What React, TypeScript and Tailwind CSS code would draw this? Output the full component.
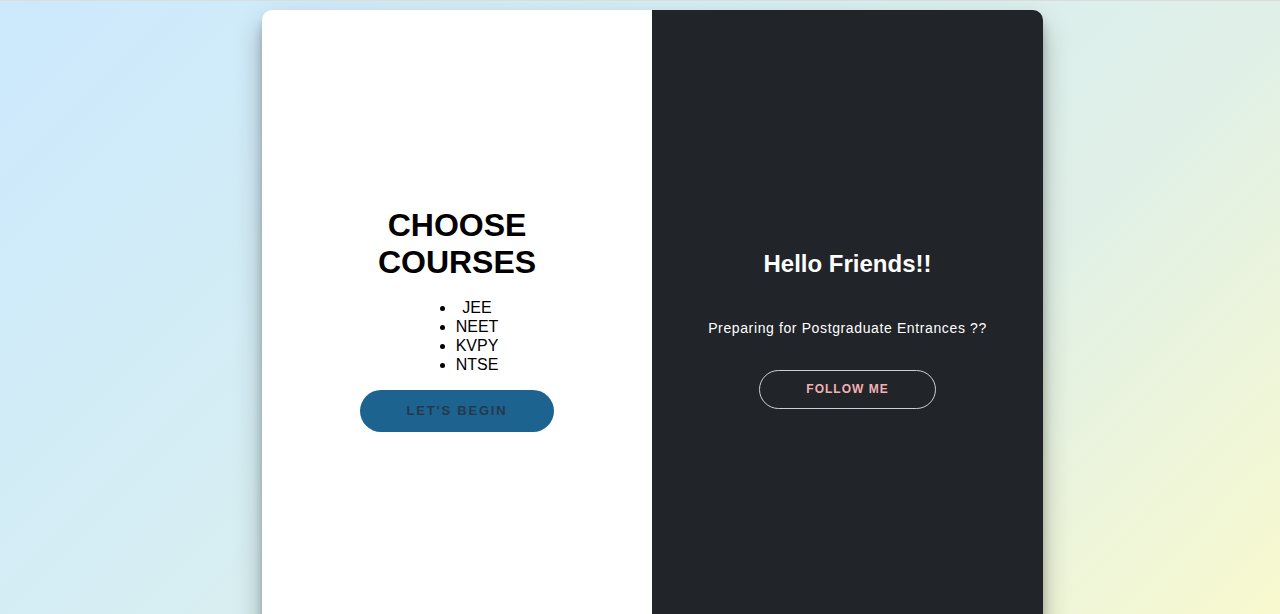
export default function App() {
  return (
    <div
      className="h-[614px] overflow-hidden border-t border-[#dcdcdc] bg-[linear-gradient(135deg,#cce9fd_0%,#d4edf5_32%,#e0f0e8_68%,#f8f9ce_100%)]"
      style={{ fontFamily: '"Liberation Sans", Arial, sans-serif' }}
    >
      <div className="flex justify-center pl-[25px] pt-[9px]">
        <div className="flex h-[640px] w-[781px] overflow-hidden rounded-[10px] shadow-[0_14px_28px_rgba(0,0,0,0.25),0_10px_10px_rgba(0,0,0,0.22)]">
          {/* left: courses */}
          <div className="flex w-[390px] flex-col items-center justify-center bg-white pb-[21px] text-black">
            <h1 className="text-center text-[32px] font-bold leading-[37px]">
              CHOOSE
              <br />
              COURSES
            </h1>
            <ul className="mt-[17px] w-fit list-disc pl-10 text-center text-base leading-[19px]">
              <li>JEE</li>
              <li>NEET</li>
              <li>KVPY</li>
              <li>NTSE</li>
            </ul>
            <button className="mt-[16px] h-[42px] w-[194px] rounded-full bg-[#1c6390] text-[13px] font-bold uppercase tracking-[1.8px] text-[#26384a]">
              Let's Begin
            </button>
          </div>

          {/* right: greeting */}
          <div className="flex w-[391px] flex-col items-center justify-center bg-[#212429] pb-[2px] text-white">
            <h1 className="text-[24px] font-bold leading-[28px]">Hello Friends!!</h1>
            <p className="mt-10 text-[14px] leading-5 tracking-[0.62px]">
              Preparing for Postgraduate Entrances ??
            </p>
            <button className="mt-8 h-[39px] w-[177px] rounded-full border border-[#cfcfcf] bg-transparent text-[12px] font-bold uppercase tracking-[1px] text-[#f2b1b1]">
              Follow Me
            </button>
          </div>
        </div>
      </div>
    </div>
  );
}
